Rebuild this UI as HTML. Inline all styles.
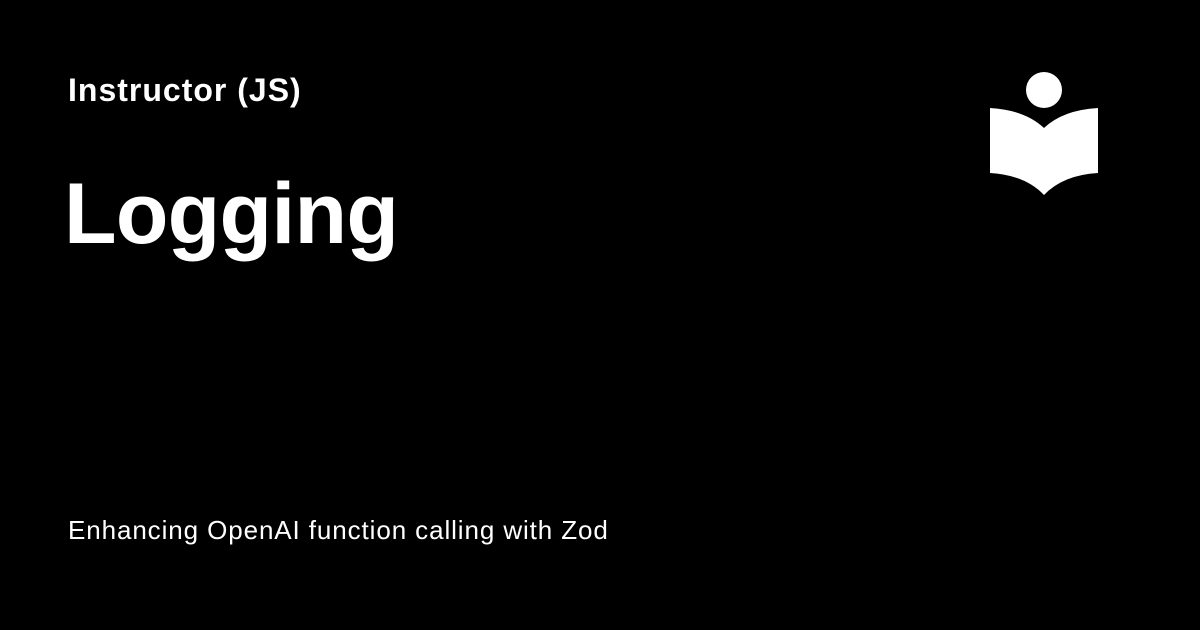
<!DOCTYPE html>
<html><head><style>
body{margin:0;width:1200px;height:630px;background:#000;overflow:hidden;font-family:"Liberation Sans",sans-serif;color:#fff;position:relative}
.a{position:absolute;left:68px;top:72px;font-size:32px;font-weight:bold;letter-spacing:1px}
.b{position:absolute;left:64px;top:165px;font-size:86px;font-weight:bold;letter-spacing:-0.7px}
.c{position:absolute;left:68px;top:515px;font-size:26px;letter-spacing:0.9px}
svg{position:absolute;left:0;top:0}
</style></head><body>
<div class="a">Instructor (JS)</div>
<div class="b">Logging</div>
<div class="c">Enhancing OpenAI function calling with Zod</div>
<svg width="1200" height="630"><circle cx="1044" cy="90" r="18" fill="#fff"/>
<path d="M990 108 Q1025 110 1044 128 Q1063 110 1098 108 L1098 173 Q1063 175 1044 195 Q1025 175 990 173 Z" fill="#fff"/></svg>
</body></html>
